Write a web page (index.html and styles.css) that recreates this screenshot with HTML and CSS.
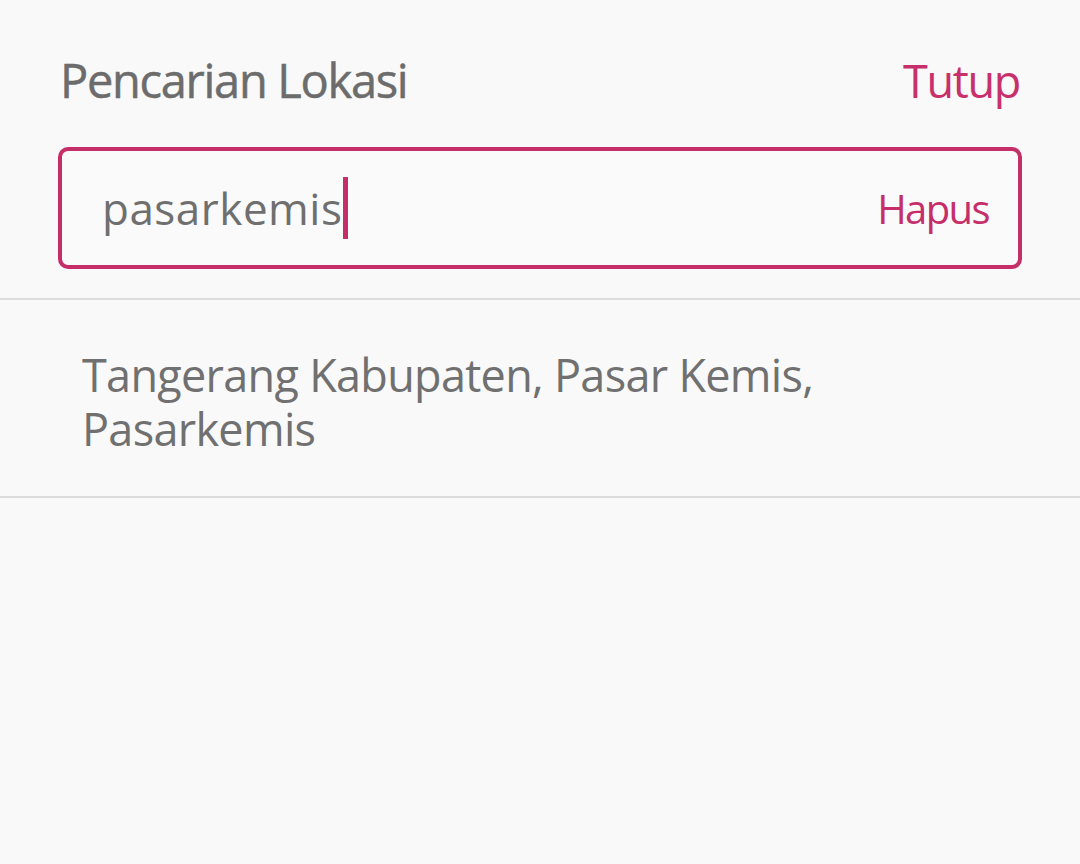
FILE: index.html
```html
<!DOCTYPE html>
<html lang="id">
<head>
<meta charset="utf-8">
<title>Pencarian Lokasi</title>
<link rel="stylesheet" href="styles.css">
</head>
<body>
<div class="page">
  <header class="header">
    <h1 class="title">Pencarian Lokasi</h1>
    <span class="close">Tutup</span>
  </header>
  <div class="search-wrap">
    <div class="search-box">
      <span class="query">pasarkemis</span><span class="caret"></span>
      <span class="clear">Hapus</span>
    </div>
  </div>
  <ul class="results">
    <li class="result">Tangerang Kabupaten, Pasar Kemis,<br>Pasarkemis</li>
  </ul>
</div>
</body>
</html>
```
FILE: styles.css
```css
html, body {
  margin: 0;
  padding: 0;
  background: #f9f9f9;
}
body {
  font-family: "Open Sans", "Liberation Sans", sans-serif;
  color: #707070;
}
.page {
  width: 1080px;
  height: 864px;
}
.header {
  display: flex;
  justify-content: space-between;
  align-items: center;
  padding: 52px 60px 0 60px;
  height: 56px;
}
.title {
  margin: 0;
  font-size: 47px;
  font-weight: 500;
  letter-spacing: -1.3px;
  color: #6c6c6c;
  -webkit-text-stroke: 0.5px #6c6c6c;
}
.close {
  font-size: 45px;
  color: #c8306c;
  letter-spacing: -1.3px;
}
.search-wrap {
  padding: 39px 58px 29px 58px;
  border-bottom: 2px solid #dcdcdc;
}
.search-box {
  height: 114px;
  border: 4px solid #c52e69;
  border-radius: 10px;
  display: flex;
  align-items: center;
  padding: 0 29px 0 40px;
  background: #fafafa;
}
.query {
  font-size: 44px;
  color: #6f6f6f;
  letter-spacing: 0.5px;
}
.caret {
  width: 5px;
  height: 62px;
  background: #c52e69;
  margin-left: 1px;
}
.clear {
  margin-left: auto;
  font-size: 40px;
  color: #c52e69;
  letter-spacing: -1.6px;
}
.results {
  list-style: none;
  margin: 0;
  padding: 0;
}
.result {
  padding: 48px 60px 40px 82px;
  font-size: 45px;
  line-height: 54px;
  color: #707070;
  letter-spacing: -0.7px;
  border-bottom: 2px solid #dcdcdc;
}
```
